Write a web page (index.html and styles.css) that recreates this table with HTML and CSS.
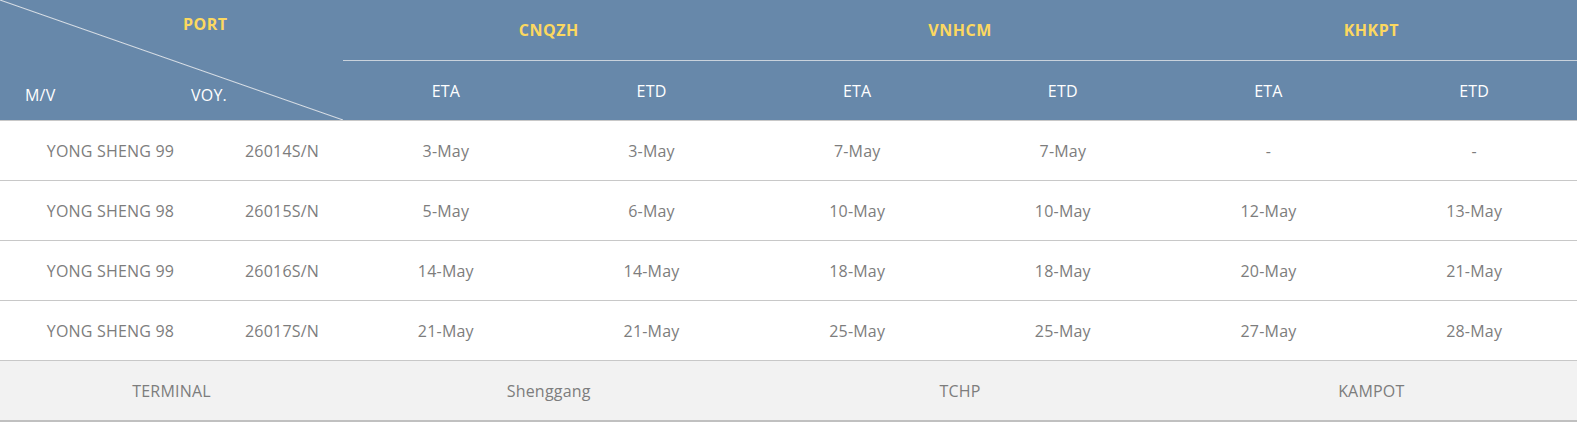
FILE: index.html
```html
<!DOCTYPE html>
<html>
<head>
<meta charset="utf-8">
<link rel="stylesheet" href="styles.css">
</head>
<body>
<table class="schedule">
  <colgroup>
    <col class="c-mv"><col class="c-voy">
    <col class="c-d"><col class="c-d"><col class="c-d"><col class="c-d"><col class="c-d"><col class="c-d">
  </colgroup>
  <thead>
    <tr class="h1">
      <th class="corner" rowspan="2" colspan="2">
        <div class="corner-box">
          <div class="corner-port">PORT</div>
          <div class="corner-bottom">
            <span class="corner-mv">M/V</span>
            <span class="corner-voy">VOY.</span>
          </div>
        </div>
      </th>
      <th class="port" colspan="2">CNQZH</th>
      <th class="port" colspan="2">VNHCM</th>
      <th class="port" colspan="2">KHKPT</th>
    </tr>
    <tr class="h2">
      <th>ETA</th><th>ETD</th><th>ETA</th><th>ETD</th><th>ETA</th><th>ETD</th>
    </tr>
  </thead>
  <tbody>
    <tr><td>YONG SHENG 99</td><td>26014S/N</td><td>3-May</td><td>3-May</td><td>7-May</td><td>7-May</td><td>-</td><td>-</td></tr>
    <tr><td>YONG SHENG 98</td><td>26015S/N</td><td>5-May</td><td>6-May</td><td>10-May</td><td>10-May</td><td>12-May</td><td>13-May</td></tr>
    <tr><td>YONG SHENG 99</td><td>26016S/N</td><td>14-May</td><td>14-May</td><td>18-May</td><td>18-May</td><td>20-May</td><td>21-May</td></tr>
    <tr><td>YONG SHENG 98</td><td>26017S/N</td><td>21-May</td><td>21-May</td><td>25-May</td><td>25-May</td><td>27-May</td><td>28-May</td></tr>
    <tr class="terminal"><td colspan="2">TERMINAL</td><td colspan="2">Shenggang</td><td colspan="2">TCHP</td><td colspan="2">KAMPOT</td></tr>
  </tbody>
</table>
</body>
</html>
```

FILE: styles.css
```css
html, body {
  margin: 0;
  padding: 0;
  background: #ffffff;
}

.schedule {
  width: 1577px;
  border-collapse: collapse;
  table-layout: fixed;
  font-family: "Open Sans", "Noto Sans", sans-serif;
  font-size: 16px;
  letter-spacing: 0.2px;
}

.c-mv { width: 221px; }
.c-voy { width: 122px; }
.c-d { width: 205.67px; }

.schedule thead th {
  background: #6788aa;
  color: #ffffff;
  font-weight: normal;
  padding: 0;
}

.h1 .port {
  color: #fcd860;
  font-weight: bold;
  font-size: 16px;
  letter-spacing: 0.5px;
  border-bottom: 1px solid #c9d2dc;
  vertical-align: middle;
  height: 60px;
}

.h2 th {
  height: 59px;
  border-bottom: 1px solid #c8c8c8;
}

.schedule thead th.corner {
  background-color: #6788aa;
  background-image: linear-gradient(to top right, transparent calc(50% - 1px), #d9dfe6 50%, transparent calc(50% + 1px));
  vertical-align: top;
  border-bottom: 1px solid #c8c8c8;
}

.corner-box {
  height: 120px;
  display: flex;
  flex-direction: column;
  justify-content: space-between;
  box-sizing: border-box;
  padding: 14px 0 15px 0;
}

.corner-port {
  color: #fcd860;
  font-weight: bold;
  font-size: 16px;
  letter-spacing: 0.5px;
  text-align: left;
  padding-left: 183px;
  line-height: 20px;
}

.corner-bottom {
  display: flex;
  text-align: left;
  line-height: 20px;
}

.corner-mv {
  padding-left: 25px;
  width: 166px;
}

.schedule tbody td {
  height: 59px;
  padding: 0;
  text-align: center;
  color: #7d7d7d;
  border-bottom: 1px solid #c8c8c8;
}

.schedule tbody .terminal td {
  background: #f2f2f2;
  height: 59px;
  border-bottom: 2px solid #c0c0c0;
}
```
